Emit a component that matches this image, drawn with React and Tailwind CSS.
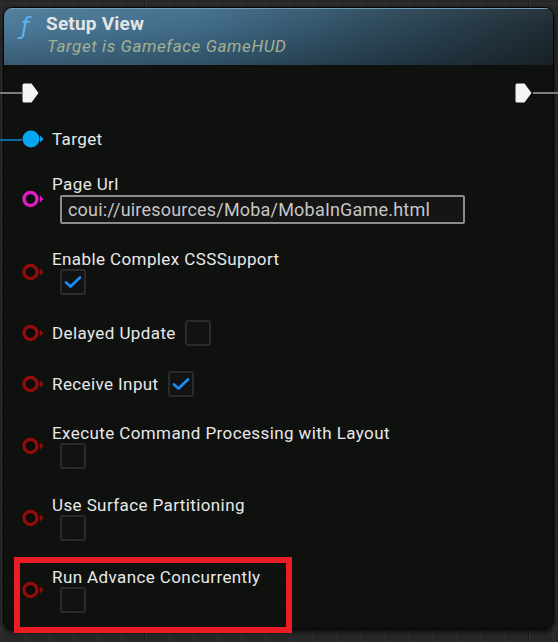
import React from 'react';

const grid =
  'bg-[#272727] bg-[linear-gradient(to_right,#1c1c1c_1px,transparent_1px),linear-gradient(to_right,#323232_1px,transparent_1px),linear-gradient(to_bottom,#323232_1px,transparent_1px)] bg-[length:384px_100%,24px_24px,24px_24px] bg-[position:144px_0,1px_3px,1px_3px]';

function ExecPin() {
  return (
    <svg width="18" height="22" viewBox="0 0 18 22">
      <path d="M2 1.5 H9.5 L16.5 11 L9.5 20.5 H2 Q0.5 20.5 0.5 19 V3 Q0.5 1.5 2 1.5 Z" fill="#f4f4f4" />
    </svg>
  );
}

function DataPin({ color, filled }) {
  return (
    <svg width="22" height="18" viewBox="0 0 22 18">
      {filled ? (
        <circle cx="9" cy="9" r="8.5" fill={color} />
      ) : (
        <circle cx="8.5" cy="9" r="6.5" fill="#0b0b0b" stroke={color} strokeWidth="3.4" />
      )}
      <path d="M18 5.5 L21.5 9 L18 12.5 Z" fill={color} />
    </svg>
  );
}

function Checkbox({ checked }) {
  return (
    <div className="w-[26px] h-[26px] rounded-[3px] border-2 border-[#2b2b2b] bg-[#121212] flex items-center justify-center">
      {checked && (
        <svg width="18" height="14" viewBox="0 0 18 14">
          <path d="M2 7.5 L6.5 11.5 L16 2.5" fill="none" stroke="#1b8cf5" strokeWidth="2.8" strokeLinecap="round" strokeLinejoin="round" />
        </svg>
      )}
    </div>
  );
}

const boolPins = [
  { label: 'Enable Complex CSSSupport', checked: true, stacked: true, gap: 'mt-[25px]' },
  { label: 'Delayed Update', checked: false, stacked: false, gap: 'mt-[25px]' },
  { label: 'Receive Input', checked: true, stacked: false, gap: 'mt-[25px]' },
  { label: 'Execute Command Processing with Layout', checked: false, stacked: true, gap: 'mt-[26px]' },
  { label: 'Use Surface Partitioning', checked: false, stacked: true, gap: 'mt-[26px]' },
  { label: 'Run Advance Concurrently', checked: false, stacked: true, gap: 'mt-[26px]' },
];

export default function App() {
  return (
    <div
      className={`relative w-[558px] h-[642px] overflow-hidden pt-[7px] pl-[3px] ${grid}`}
      style={{ fontFamily: 'Roboto, "Liberation Sans", sans-serif' }}
    >
      {/* node */}
      <div className="w-[551px] h-[622px] rounded-[9px] border border-[#050505] bg-[#0e100e]/[0.93] shadow-[0_3px_4px_rgba(0,0,0,0.7)] flex flex-col overflow-hidden">
        {/* header */}
        <div className="relative h-[57px] shrink-0 bg-[linear-gradient(100deg,#4d7b9a_0%,#416c8a_35%,#2d4859_70%,#1f2b32_100%)] border-t border-[#6e9cb9]">
          <div className="absolute inset-0 bg-[linear-gradient(to_bottom,rgba(255,255,255,0.04)_0%,rgba(0,0,0,0)_30%,rgba(0,0,0,0.25)_100%)]" />
          <div className="relative flex pl-[17px] pt-[3px]">
            <div className="w-[25px] text-[23px] leading-[28px] italic text-[#5cb3f0]" style={{ fontFamily: '"DejaVu Sans", sans-serif' }}>
              ƒ
            </div>
            <div className="flex flex-col">
              <span className="text-[19px] leading-[24px] font-bold tracking-[0.2px] text-[#e4e4e4]">Setup View</span>
              <span className="text-[17px] leading-[20px] italic tracking-[0.6px] text-[#a2b193] pl-px">Target is Gameface GameHUD</span>
            </div>
          </div>
        </div>

        {/* pins */}
        <div className="flex flex-col pt-[17px] pl-[18px] text-[17px] leading-[20px] tracking-[0.4px] text-[#e8e8e8]">
          <div className="flex items-center justify-between h-[22px] pr-[20px]">
            <ExecPin />
            <ExecPin />
          </div>

          <div className="flex items-center mt-[25px]">
            <DataPin color="#05a6f0" filled />
            <span className="ml-[8px]">Target</span>
          </div>

          <div className="flex items-center mt-[25px]">
            <DataPin color="#e21cc5" />
            <div className="ml-[8px] flex flex-col">
              <span>Page Url</span>
              <div className="mt-px ml-[8px] w-[405px] h-[29px] rounded-[2px] border-2 border-[#8c8c8c] bg-[#151515] px-[6px] text-[18px] leading-[25px] tracking-[0.2px] text-[#c6c6c6] whitespace-nowrap overflow-hidden">
                coui://uiresources/Moba/MobaInGame.html
              </div>
            </div>
          </div>

          {boolPins.map((p) => (
            <div key={p.label} className={`flex items-center ${p.gap}`}>
              <DataPin color="#940b0b" />
              {p.stacked ? (
                <div className="ml-[8px] flex flex-col">
                  <span>{p.label}</span>
                  <div className="ml-[8px]">
                    <Checkbox checked={p.checked} />
                  </div>
                </div>
              ) : (
                <div className="ml-[8px] flex items-center gap-[9px]">
                  <span>{p.label}</span>
                  <Checkbox checked={p.checked} />
                </div>
              )}
            </div>
          ))}
        </div>
      </div>

      {/* wires into the node */}
      <div className="absolute left-0 top-[92px] w-[22px] h-[2px] bg-[#7d7d7d]" />
      <div className="absolute left-[533px] top-[92px] w-[25px] h-[2px] bg-[#7d7d7d]" />
      <div className="absolute left-0 top-[139px] w-[22px] h-[2px] bg-[#0b6aa3]" />

      {/* highlight frame */}
      <div className="absolute left-[14px] top-[557px] w-[278px] h-[76px] border-[6px] border-[#ec1c24]" />
    </div>
  );
}
